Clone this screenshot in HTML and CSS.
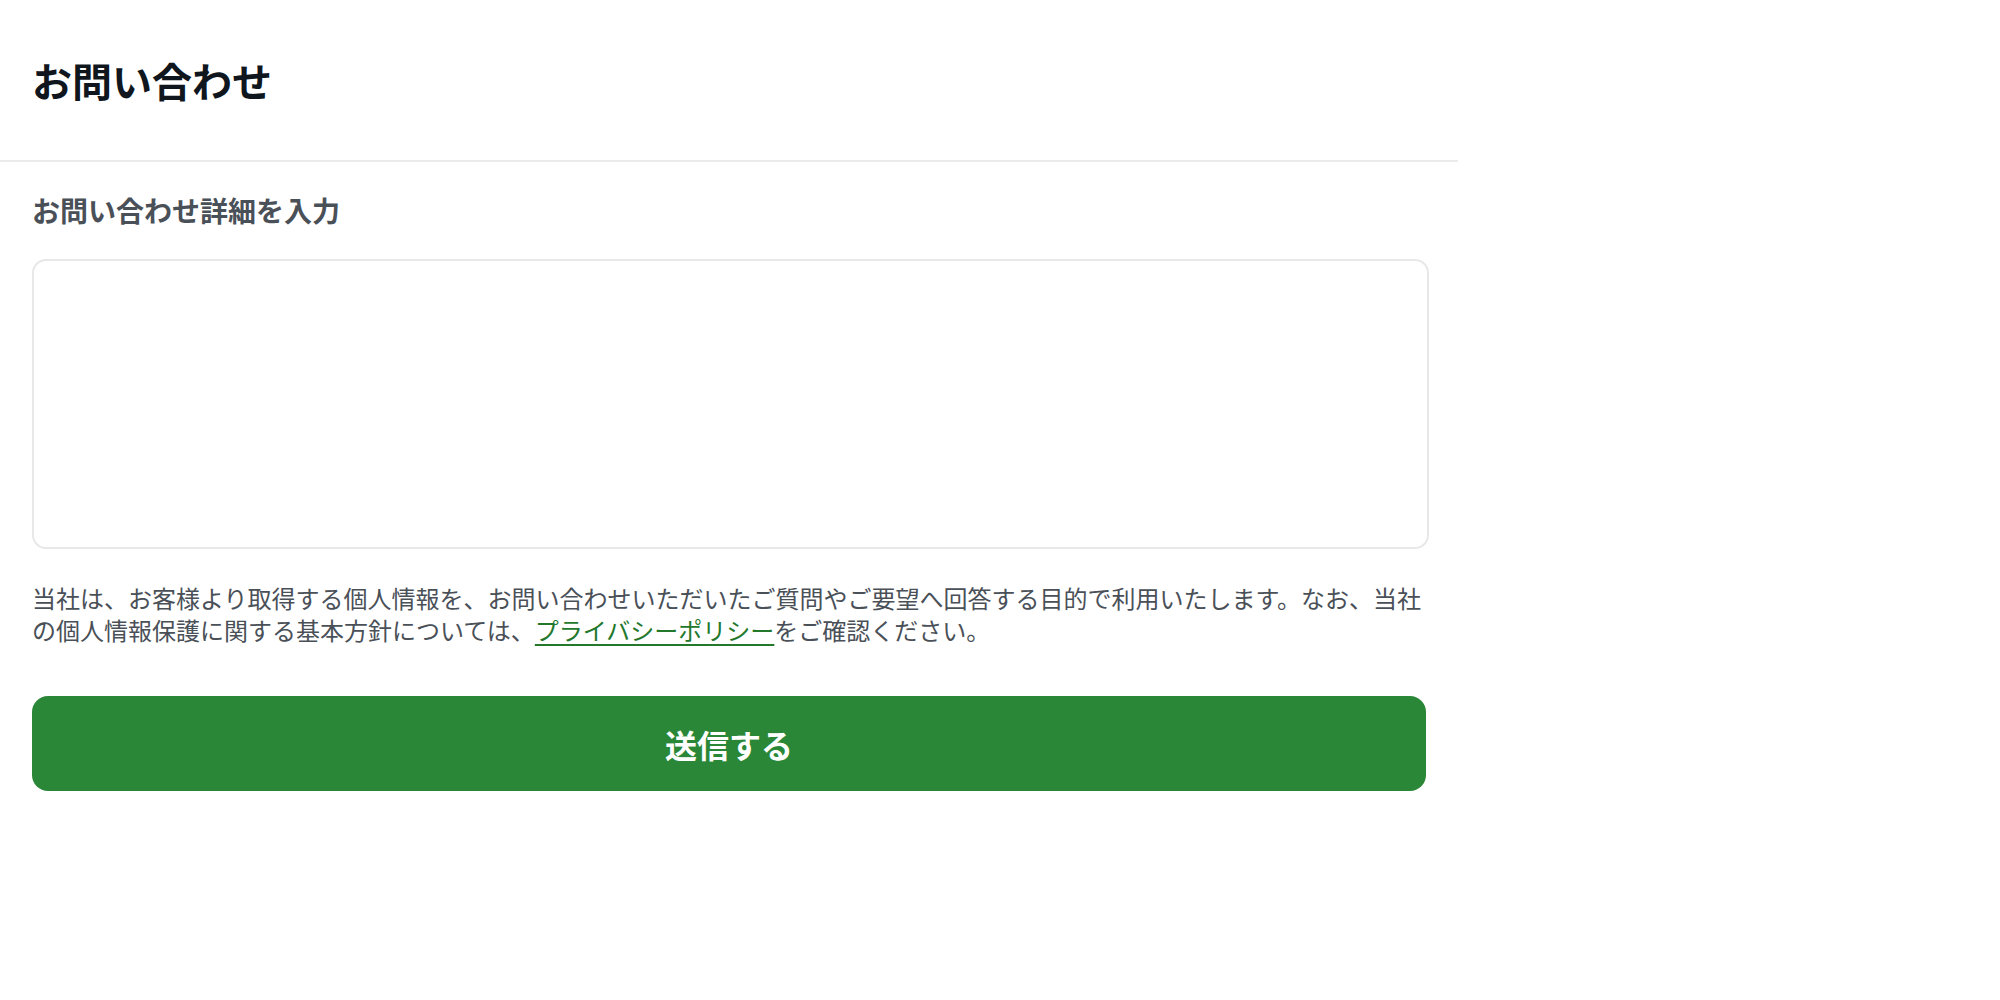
FILE: index.html
```html
<!DOCTYPE html>
<html lang="ja">
<head>
    <meta charset="UTF-8">
    <meta name="viewport" content="width=device-width, initial-scale=1.0">
    <title>お問い合わせ</title>
    <link rel="stylesheet" href="styles.css">
</head>
<body>
    <div class="page">
        <!-- ヘッダー -->
        <header class="page-header">
            <h1 class="page-title">お問い合わせ</h1>
        </header>

        <!-- フォーム -->
        <form class="contact-form" onsubmit="return false;">
            <label class="field-label" for="detail">お問い合わせ詳細を入力</label>
            <textarea id="detail" class="field-textarea"></textarea>

            <p class="notice">当社は、お客様より取得する個人情報を、お問い合わせいただいたご質問やご要望へ回答する目的で利用いたします。なお、当社の個人情報保護に関する基本方針については、<a href="#" class="notice-link">プライバシーポリシー</a>をご確認ください。</p>

            <button type="submit" class="submit-button">送信する</button>
        </form>
    </div>
</body>
</html>
```

FILE: styles.css
```css
body {
    margin: 0;
    background: #fff;
    font-family: "Noto Sans CJK JP", "Noto Sans", sans-serif;
    color: #4a5058;
}

.page {
    width: 1458px;
}

/* ヘッダー */
.page-header {
    height: 160px;
    display: flex;
    align-items: center;
    padding: 0 32px;
    border-bottom: 2px solid #ebebeb;
}
.page-title {
    margin: 0;
    font-size: 40px;
    font-weight: 700;
    line-height: 1;
    color: #0f161d;
}

/* フォーム */
.contact-form {
    display: flex;
    flex-direction: column;
    padding: 27px 29px 0 32px;
}
.field-label {
    font-size: 28px;
    font-weight: 700;
    line-height: 42px;
    color: #4a5058;
}
.field-textarea {
    margin-top: 28px;
    height: 290px;
    box-sizing: border-box;
    border: 2px solid #e8e8e8;
    border-radius: 14px;
    resize: none;
    outline: none;
    font-family: inherit;
    font-size: 24px;
    padding: 16px;
}
.notice {
    margin: 33px 0 0 0;
    font-size: 24px;
    line-height: 32px;
    color: #4a5058;
}
.notice-link {
    color: #23782c;
    text-decoration: underline;
    text-underline-offset: 4px;
}
.submit-button {
    margin-top: 50px;
    width: 1394px;
    height: 95px;
    border: none;
    border-radius: 16px;
    background: #2a8738;
    color: #fff;
    font-family: inherit;
    font-size: 32px;
    font-weight: 700;
    cursor: pointer;
}
```
